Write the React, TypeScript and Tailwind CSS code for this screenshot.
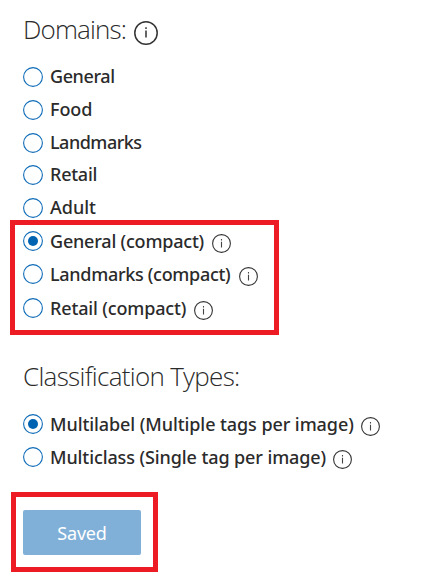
function InfoIcon({ large = false }: { large?: boolean }) {
  return large ? (
    <svg className="block h-6 w-6 shrink-0" viewBox="0 0 24 24" fill="none">
      <circle cx="12" cy="12" r="11.2" stroke="#333" strokeWidth="1.5" />
      <path d="M12 9.5v7M12 6.2v1.7" stroke="#333" strokeWidth="1.5" />
    </svg>
  ) : (
    <svg className="block h-[19px] w-[19px] shrink-0" viewBox="0 0 19 19" fill="none">
      <circle cx="9.5" cy="9.5" r="8.9" stroke="#333" strokeWidth="1.1" />
      <path d="M9.5 7.8v5.6M9.5 5v1.4" stroke="#444" strokeWidth="1.1" />
    </svg>
  );
}

type OptionProps = { label: string; width: string; checked?: boolean; info?: boolean };

function Option({ label, width, checked = false, info = false }: OptionProps) {
  return (
    <div className="flex h-5 items-center">
      <svg className="block h-5 w-5 shrink-0" viewBox="0 0 20 20" fill="none">
        <circle cx="10" cy="10" r="9.4" stroke="#0f6cb8" strokeWidth="1.1" />
        {checked && <circle cx="10" cy="10" r="5" fill="#0063b1" />}
      </svg>
      <span className={`ml-[7px] whitespace-nowrap text-[18px] leading-5 font-medium ${width}`}>{label}</span>
      {info && (
        <span className="mt-[5px] ml-[7px]">
          <InfoIcon />
        </span>
      )}
    </div>
  );
}

export default function App() {
  return (
    <main className="flex h-[579px] w-[436px] flex-col items-start overflow-hidden bg-white font-['Noto_Sans','Open_Sans',sans-serif] text-[#2b2b2b]">
      <h1 className="mt-[14px] ml-[23px] flex h-8 items-center font-['Open_Sans','Noto_Sans',sans-serif] text-[26px] leading-8 font-light tracking-[-0.85px]">
        <span className="w-[111px] pb-[2px] whitespace-nowrap">Domains:</span>
        <span className="mt-[5px]"><InfoIcon large /></span>
      </h1>
      <div className="mt-[21px] ml-[23px]">
        <Option label="General" width="w-[65px] pb-[2px] tracking-[-0.4px]" />
        <div className="mt-[13px]"><Option label="Food" width="w-[43px] pb-[2px] tracking-[-0.1px]" /></div>
        <div className="mt-[13px]"><Option label="Landmarks" width="w-[92px] pb-[2px] tracking-[-0.5px]" /></div>
        <div className="mt-3"><Option label="Retail" width="w-[47px] pb-[2px] tracking-[-0.25px]" /></div>
        <div className="mt-[13px]"><Option label="Adult" width="w-[47px] pb-[2px]" /></div>
      </div>
      <section className="mt-[2px] ml-[10px] h-[115px] w-[269px] border-5 border-[#ed1c24] pt-[6px] pl-2">
        <Option label="General (compact)" width="w-[155px] tracking-[-0.2px]" checked info />
        <div className="mt-[13px]"><Option label="Landmarks (compact)" width="w-[182px] tracking-[-0.3px]" info /></div>
        <div className="mt-[14px]"><Option label="Retail (compact)" width="w-[137px] tracking-[-0.15px]" info /></div>
      </section>
      <h2 className="mt-[25px] ml-[23px] h-8 whitespace-nowrap font-['Open_Sans','Noto_Sans',sans-serif] text-[26px] leading-8 font-light tracking-[-0.7px]">Classification Types:</h2>
      <div className="mt-[22px] ml-[23px]">
        <Option label="Multilabel (Multiple tags per image)" width="w-[304px] tracking-[-0.08px]" checked info />
        <div className="mt-[13px]"><Option label="Multiclass (Single tag per image)" width="w-[276px] tracking-[-0.1px]" info /></div>
      </div>
      <section className="mt-[25px] ml-[11px] h-[80px] w-[147px] border-5 border-[#ed1c24] pt-[13px] pl-[7px]">
        <button className="block h-[45px] w-[118px] rounded-xs bg-[#80b0d8] pt-[2px] text-[18px] tracking-[-0.2px] text-white">Saved</button>
      </section>
    </main>
  );
}
